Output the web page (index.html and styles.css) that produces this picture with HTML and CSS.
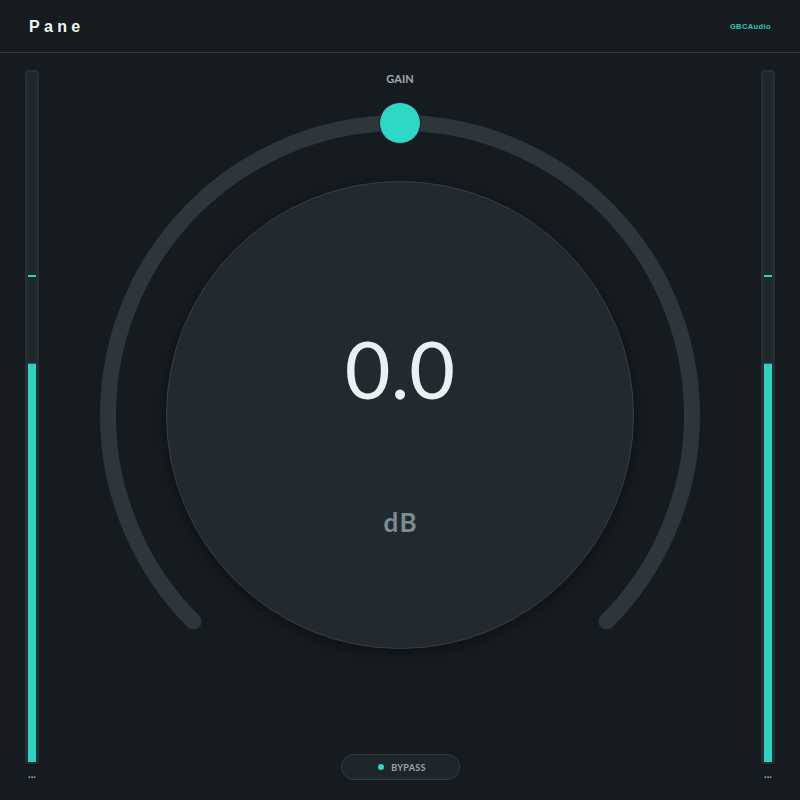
FILE: index.html
```html
<!DOCTYPE html>
<html lang="en">
<head>
    <meta charset="UTF-8">
    <meta name="viewport" content="width=device-width, initial-scale=1.0">
    <title>Pane</title>
    <link rel="stylesheet" href="styles.css">
</head>
<body>

<div class="header">
    <div class="title">Pane</div>
    <div class="brand">GBCAudio</div>
</div>

<div class="main">
    <div class="meter-col">
        <div class="meter">
            <div class="peak" style="bottom: 70.3%"></div>
            <div class="fill" style="height: 57.7%"></div>
        </div>
        <div class="meter-label">...</div>
    </div>

    <div class="center">
        <div class="label">GAIN</div>
        <div class="knob">
            <svg class="arc" width="620" height="560" viewBox="0 0 620 560">
                <path d="M 103.5 528.5 A 292 292 0 1 1 516.5 528.5" fill="none" stroke="#2c363b" stroke-width="16" stroke-linecap="round"/>
                <circle cx="310" cy="30" r="20.5" fill="#30d6c6" stroke="#1b2226" stroke-width="1"/>
            </svg>
            <div class="dial">
                <div class="value">0.0</div>
                <div class="unit">dB</div>
            </div>
        </div>
        <div class="bypass">
            <span class="dot"></span>
            <span>BYPASS</span>
        </div>
    </div>

    <div class="meter-col">
        <div class="meter">
            <div class="peak" style="bottom: 70.3%"></div>
            <div class="fill" style="height: 57.7%"></div>
        </div>
        <div class="meter-label">...</div>
    </div>
</div>

</body>
</html>
```
FILE: styles.css
```css
body {
    margin: 0;
    background-color: #161b1f;
    font-family: Lato, "Noto Sans", sans-serif;
    width: 800px;
    height: 800px;
    overflow: hidden;
}
.header {
    height: 52px;
    border-bottom: 1px solid #2f383d;
    display: flex;
    justify-content: space-between;
    align-items: center;
    padding: 0 29px;
}
.title {
    font-family: "Liberation Sans", Arial, sans-serif;
    font-weight: bold;
    font-size: 16px;
    letter-spacing: 4.3px;
    color: #f2f5f6;
    margin-top: 2px;
}
.brand {
    font-family: "Liberation Sans", Arial, sans-serif;
    font-weight: bold;
    font-size: 7.5px;
    letter-spacing: 0.4px;
    color: #2ec8b9;
}
.main {
    display: flex;
    height: 747px;
    padding: 0 25px;
}
.meter-col {
    display: flex;
    flex-direction: column;
    align-items: center;
    padding-top: 17px;
    width: 14px;
}
.meter {
    position: relative;
    box-sizing: border-box;
    width: 14px;
    height: 694px;
    border: 2px solid #283236;
    border-radius: 4px;
    background: #20282d;
}
.fill {
    position: absolute;
    left: 1px;
    right: 1px;
    bottom: 0;
    background: #2dd4c2;
    border-top: 1px solid #2a6f69;
}
.peak {
    position: absolute;
    left: 1px;
    right: 1px;
    height: 2px;
    background: #2dd4c2;
}
.meter-label {
    margin-top: 4px;
    font-size: 11px;
    font-weight: bold;
    line-height: 11px;
    color: #9aa4a9;
}
.center {
    flex: 1;
    display: flex;
    flex-direction: column;
    align-items: center;
    padding-top: 20px;
    padding-bottom: 20px;
    box-sizing: border-box;
}
.label {
    font-size: 11px;
    font-weight: bold;
    line-height: 1;
    color: #a0a9ae;
}
.knob {
    position: relative;
    width: 620px;
    height: 560px;
    margin-top: 9px;
    display: flex;
    justify-content: center;
}
.arc {
    position: absolute;
    left: 0;
    top: 0;
}
.dial {
    position: relative;
    box-sizing: border-box;
    width: 468px;
    height: 468px;
    margin-top: 88px;
    border-radius: 50%;
    background: #222a2f;
    border: 1px solid #353f45;
    box-shadow: 0 4px 14px rgba(0, 0, 0, 0.35);
    display: flex;
    flex-direction: column;
    align-items: center;
    padding-top: 147px;
}
.value {
    font-size: 79px;
    font-weight: 400;
    line-height: 1;
    color: #e9f1f3;
}
.unit {
    margin-top: 101px;
    font-size: 26px;
    font-weight: bold;
    line-height: 1;
    letter-spacing: 1.5px;
    margin-left: 1.5px;
    color: #7d8b92;
}
.bypass {
    margin-top: auto;
    box-sizing: border-box;
    width: 119px;
    height: 26px;
    border-radius: 13px;
    border: 1px solid #333d43;
    background: #1f262b;
    display: flex;
    align-items: center;
    justify-content: center;
    gap: 7px;
    font-size: 9px;
    font-weight: bold;
    letter-spacing: 0.3px;
    color: #9aa4a9;
    padding-left: 4px;
}
.dot {
    width: 6px;
    height: 6px;
    border-radius: 50%;
    background: #2ed6c5;
}
```
